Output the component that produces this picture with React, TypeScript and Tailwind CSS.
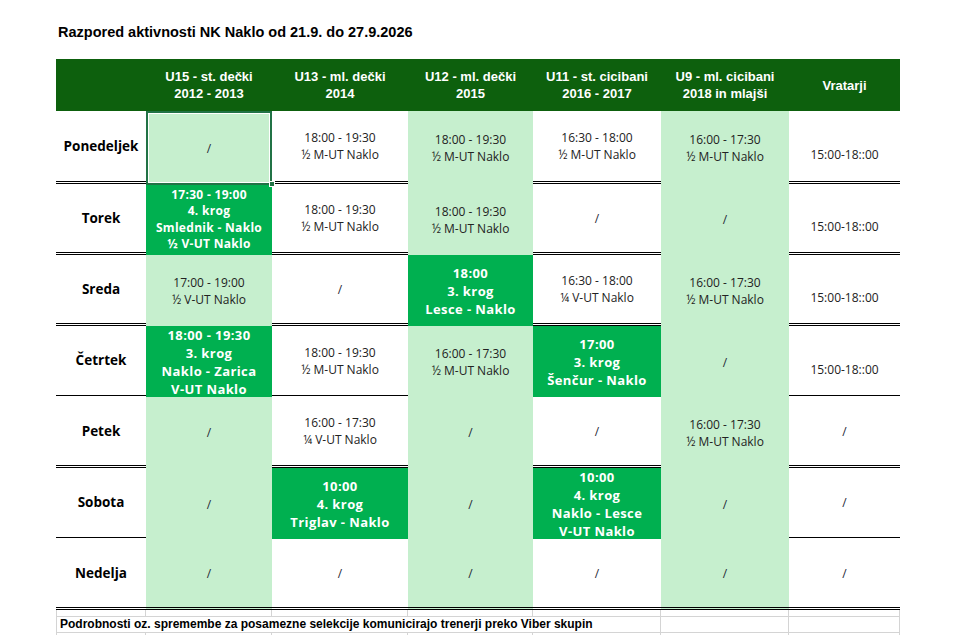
type Cell =
  | { t: 'slash' }
  | { t: 'txt'; l: string[] }
  | { t: 'match'; l: string[]; big?: boolean }
  | { t: 'gk' }

const S: Cell = { t: 'slash' }
const GK: Cell = { t: 'gk' }
const txt = (...l: string[]): Cell => ({ t: 'txt', l })
const match = (big: boolean, ...l: string[]): Cell => ({ t: 'match', l, big })

const headers = [
  ['U15 - st. dečki', '2012 - 2013'],
  ['U13 - ml. dečki', '2014'],
  ['U12 - ml. dečki', '2015'],
  ['U11 - st. cicibani', '2016 - 2017'],
  ['U9 - ml. cicibani', '2018 in mlajši'],
  ['Vratarji'],
]

const rows: { day: string; cells: Cell[] }[] = [
  {
    day: 'Ponedeljek',
    cells: [
      S,
      txt('18:00 - 19:30', '½ M-UT Naklo'),
      txt('18:00 - 19:30', '½ M-UT Naklo'),
      txt('16:30 - 18:00', '½ M-UT Naklo'),
      txt('16:00 - 17:30', '½ M-UT Naklo'),
      GK,
    ],
  },
  {
    day: 'Torek',
    cells: [
      match(false, '17:30 - 19:00', '4. krog', 'Smlednik - Naklo', '½ V-UT Naklo'),
      txt('18:00 - 19:30', '½ M-UT Naklo'),
      txt('18:00 - 19:30', '½ M-UT Naklo'),
      S,
      S,
      GK,
    ],
  },
  {
    day: 'Sreda',
    cells: [
      txt('17:00 - 19:00', '½ V-UT Naklo'),
      S,
      match(true, '18:00', '3. krog', 'Lesce - Naklo'),
      txt('16:30 - 18:00', '¼ V-UT Naklo'),
      txt('16:00 - 17:30', '½ M-UT Naklo'),
      GK,
    ],
  },
  {
    day: 'Četrtek',
    cells: [
      match(true, '18:00 - 19:30', '3. krog', 'Naklo - Zarica', 'V-UT Naklo'),
      txt('18:00 - 19:30', '½ M-UT Naklo'),
      txt('16:00 - 17:30', '½ M-UT Naklo'),
      match(true, '17:00', '3. krog', 'Šenčur - Naklo'),
      S,
      GK,
    ],
  },
  {
    day: 'Petek',
    cells: [S, txt('16:00 - 17:30', '¼ V-UT Naklo'), S, S, txt('16:00 - 17:30', '½ M-UT Naklo'), S],
  },
  {
    day: 'Sobota',
    cells: [
      S,
      match(true, '10:00', '4. krog', 'Triglav - Naklo'),
      S,
      match(true, '10:00', '4. krog', 'Naklo - Lesce', 'V-UT Naklo'),
      S,
      S,
    ],
  },
  { day: 'Nedelja', cells: [S, S, S, S, S, S] },
]

const lightCols = [true, false, true, false, true, false]

function ScheduleCell({ cell, col, last }: { cell: Cell; col: number; last: boolean }) {
  const isMatch = cell.t === 'match'
  const bg = isMatch ? 'bg-[#00b050]' : lightCols[col] ? 'bg-[#c6efce]' : 'bg-white'
  const border = last || (!isMatch && !lightCols[col]) ? 'border-b-[3px] border-double border-black' : ''

  return (
    <div className={`flex flex-col items-center justify-center text-center ${bg} ${border}`}>
      {cell.t === 'slash' && <span className="text-[12px] leading-[17px] text-[#1f2937]">/</span>}
      {cell.t === 'txt' &&
        cell.l.map((line, i) => (
          <span key={i} className="text-[12px] leading-[17px] text-[#222]">
            {line}
          </span>
        ))}
      {cell.t === 'gk' && (
        <span className="pt-[17px] text-[12px] leading-[17px] text-[#222]">15:00-18::00</span>
      )}
      {cell.t === 'match' &&
        cell.l.map((line, i) => (
          <span
            key={i}
            className={
              cell.big
                ? 'text-[13px] leading-[18px] font-bold tracking-[0.4px] text-white'
                : 'text-[12px] leading-[16.5px] font-bold tracking-[0.3px] text-white'
            }
          >
            {line}
          </span>
        ))}
    </div>
  )
}

export default function App() {
  const cols = 'grid grid-cols-[90px_126px_136px_125px_128px_128px_111px]'

  return (
    <div className="w-[963px] h-[635px] overflow-hidden bg-white font-['Open_Sans',sans-serif]">
      <h1 className="pl-[58px] pt-[24px] text-[14.5px] leading-[17px] font-bold text-black font-['Liberation_Sans',Arial,sans-serif]">
        Razpored aktivnosti NK Naklo od 21.9. do 27.9.2026
      </h1>

      <div className="ml-[56px] mt-[18px] w-[844px]">
        {/* Header */}
        <div className={`${cols} h-[52px] bg-[#0d600d] font-['Liberation_Sans',Arial,sans-serif]`}>
          <div />
          {headers.map((h, i) => (
            <div key={i} className="flex flex-col items-center justify-center text-center">
              {h.map((line) => (
                <span key={line} className="text-[13px] leading-[17px] font-bold text-white">
                  {line}
                </span>
              ))}
            </div>
          ))}
        </div>

        {/* Days */}
        {rows.map((row, r) => {
          const last = r === rows.length - 1
          return (
            <div key={row.day} className={`${cols} ${r === 0 ? 'h-[73px]' : 'h-[71px]'}`}>
              <div className="flex items-center justify-center border-b-[3px] border-double border-black bg-white">
                <span className="text-[13.5px] font-bold text-black">{row.day}</span>
              </div>
              {row.cells.map((cell, c) =>
                r === 0 && c === 0 ? (
                  <div key={c} className="relative">
                    <div className="absolute inset-0 -bottom-[1px] border-2 border-[#217346] bg-[#c6efce] ring-1 ring-inset ring-white flex items-center justify-center">
                      <span className="text-[12px] leading-[17px] text-[#1f2937]">/</span>
                    </div>
                    <div className="absolute -bottom-[3px] -right-[3px] w-[6px] h-[6px] bg-[#217346] border border-white" />
                  </div>
                ) : (
                  <ScheduleCell key={c} cell={cell} col={c} last={last} />
                ),
              )}
            </div>
          )
        })}

        {/* Footer gridlines */}
        <div className="font-['Liberation_Sans',Arial,sans-serif]">
          <div className={`${cols} h-[7px]`}>
            {Array.from({ length: 7 }).map((_, i) => (
              <div
                key={i}
                className={`border-b border-r border-[#d4d4d4] ${i === 0 ? 'border-l' : ''}`}
              />
            ))}
          </div>
          <div className={`${cols} h-[16px]`}>
            <div className="col-span-5 border-b border-r border-l border-[#d4d4d4] pl-[3px] text-[12px] leading-[15px] font-bold text-black whitespace-nowrap">
              Podrobnosti oz. spremembe za posamezne selekcije komunicirajo trenerji preko Viber skupin
            </div>
            <div className="border-b border-r border-[#d4d4d4]" />
            <div className="border-b border-r border-[#d4d4d4]" />
          </div>
          <div className={`${cols} h-[20px]`}>
            {Array.from({ length: 7 }).map((_, i) => (
              <div key={i} className={`border-r border-[#d4d4d4] ${i === 0 ? 'border-l' : ''}`} />
            ))}
          </div>
        </div>
      </div>
    </div>
  )
}
